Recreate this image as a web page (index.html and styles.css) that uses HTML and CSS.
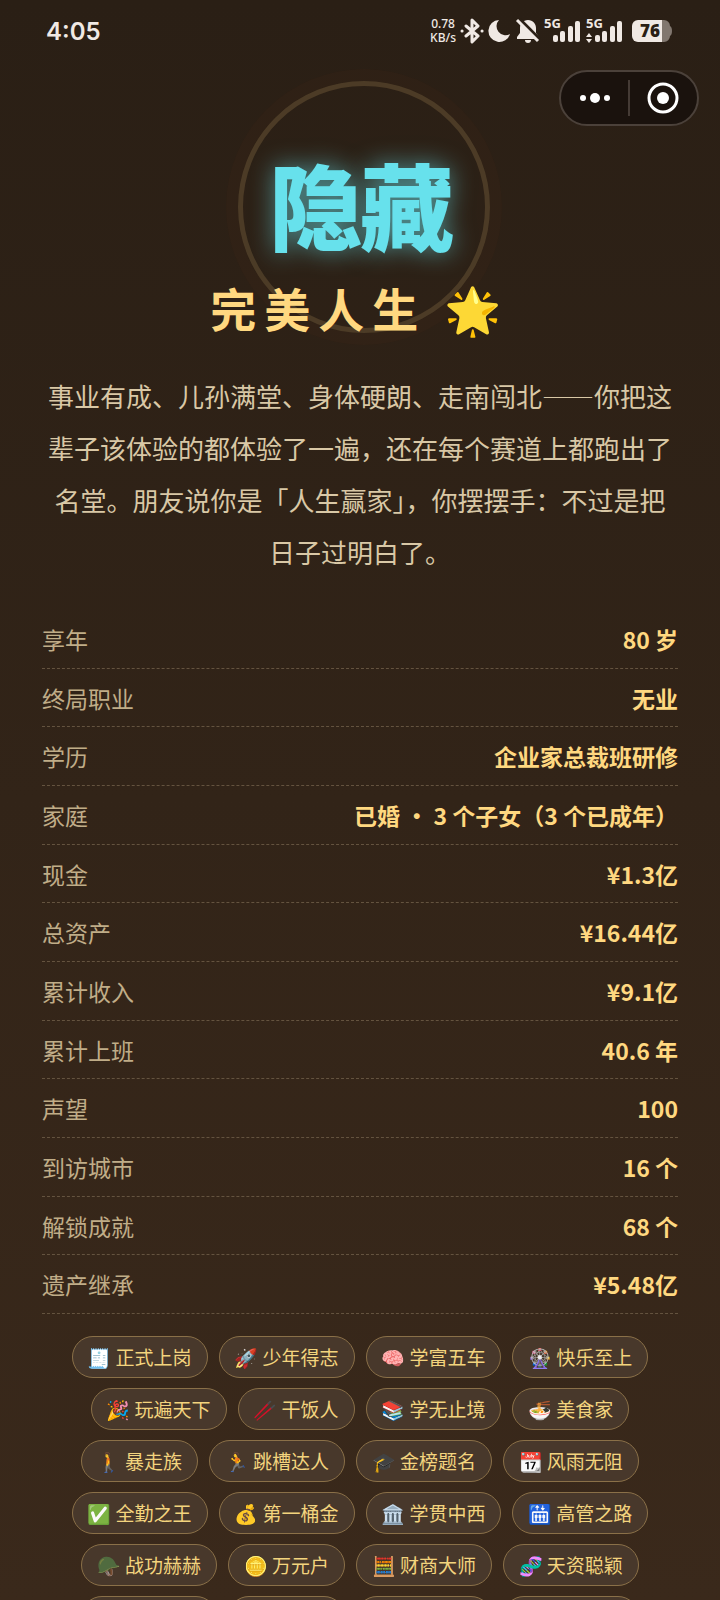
FILE: index.html
```
<!DOCTYPE html>
<html lang="zh-CN">

<head>
    <meta charset="utf-8">
    <meta name="viewport" content="width=device-width, initial-scale=1">
    <title>完美人生</title>
    <link rel="stylesheet" href="styles.css">
</head>

<body>
    <div class="screen">
        <header class="status">
            <span class="time">4:05</span>
            <div class="status-right">
                <span class="speed">0.78<br>KB/s</span>
                <svg width="25" height="26" viewBox="0 0 25 26" fill="none" stroke="#f0e9e4" stroke-width="3" stroke-linejoin="round" stroke-linecap="round">
                    <path d="M7 8l12 10-6 6V2l6 6L7 18"/>
                    <path d="M3 13h.1M23 13h.1"/>
                </svg>
                <svg width="24" height="24" viewBox="0 0 24 24" fill="#f0e9e4">
                    <path d="M12 1a11 11 0 1 0 11 14A9 9 0 0 1 12 1z"/>
                </svg>
                <svg width="26" height="26" viewBox="0 0 26 26" fill="#f0e9e4">
                    <path d="M14 2c-5 0-8 4-8 8v5l-3 4v2h22v-2l-3-4v-5c0-4-3-8-8-8z"/>
                    <path d="M11 22h6a3 3 0 0 1-6 0z"/>
                    <path d="M4 0l22 22" stroke="#2a1f15" stroke-width="4"/>
                    <path d="M3 2l21 21" stroke="#f0e9e4" stroke-width="3"/>
                </svg>
                <svg class="signal" width="39" height="30" viewBox="0 0 39 30" fill="#f0e9e4">
                    <text x="1" y="12">5G</text>
                    <rect x="10" y="19" width="5" height="7" rx="2"/>
                    <rect x="17" y="15" width="5" height="11" rx="2"/>
                    <rect x="25" y="10" width="5" height="16" rx="2"/>
                    <rect x="32" y="5" width="5" height="21" rx="2"/>
                </svg>
                <svg class="signal" width="39" height="30" viewBox="0 0 39 30" fill="#f0e9e4">
                    <text x="1" y="12">5G</text>
                    <path d="M1 21l3-4 3 4zM1 23l3 4 3-4z"/>
                    <rect x="10" y="19" width="5" height="7" rx="2"/>
                    <rect x="17" y="15" width="5" height="11" rx="2"/>
                    <rect x="25" y="10" width="5" height="16" rx="2"/>
                    <rect x="32" y="5" width="5" height="21" rx="2"/>
                </svg>
                <svg class="battery" width="41" height="24" viewBox="0 0 41 24">
                    <path d="M31 1h2a6 6 0 0 1 6 6q2 1 2 5t-2 5a6 6 0 0 1-6 6h-2z" fill="#81776f"/>
                    <path d="M7 1h24v22H7a6 6 0 0 1-6-6V7a6 6 0 0 1 6-6z" fill="#f0e9e4"/>
                    <text x="19" y="18" text-anchor="middle">76</text>
                </svg>
            </div>
        </header>

        <div class="capsule">
            <button type="button" aria-label="更多">
                <svg width="30" height="12" viewBox="0 0 30 12" fill="#fff">
                    <circle cx="3" cy="6" r="3"/>
                    <circle cx="15" cy="6" r="5"/>
                    <circle cx="27" cy="6" r="3"/>
                </svg>
            </button>
            <button type="button" aria-label="关闭">
                <svg width="32" height="32" viewBox="0 0 32 32" fill="#fff">
                    <circle cx="16" cy="16" r="14" fill="none" stroke="#fff" stroke-width="3"/>
                    <circle cx="16" cy="16" r="6"/>
                </svg>
            </button>
        </div>

        <main class="ending">
            <div class="hero">
                <div class="ring"></div>
                <div class="rank">隐藏</div>
                <h1 class="title">完美人生 🌟</h1>
            </div>

            <p class="story">事业有成、儿孙满堂、身体硬朗、走南闯北——你把这辈子该体验的都体验了一遍，还在每个赛道上都跑出了名堂。朋友说你是「人生赢家」，你摆摆手：不过是把日子过明白了。</p>

            <dl class="stats">
                <div class="row"><dt>享年</dt><dd>80 岁</dd></div>
                <div class="row"><dt>终局职业</dt><dd>无业</dd></div>
                <div class="row"><dt>学历</dt><dd>企业家总裁班研修</dd></div>
                <div class="row"><dt>家庭</dt><dd>已婚 · 3 个子女（3 个已成年）</dd></div>
                <div class="row"><dt>现金</dt><dd>¥1.3亿</dd></div>
                <div class="row"><dt>总资产</dt><dd>¥16.44亿</dd></div>
                <div class="row"><dt>累计收入</dt><dd>¥9.1亿</dd></div>
                <div class="row"><dt>累计上班</dt><dd>40.6 年</dd></div>
                <div class="row"><dt>声望</dt><dd>100</dd></div>
                <div class="row"><dt>到访城市</dt><dd>16 个</dd></div>
                <div class="row"><dt>解锁成就</dt><dd>68 个</dd></div>
                <div class="row"><dt>遗产继承</dt><dd>¥5.48亿</dd></div>
            </dl>

            <ul class="tags">
                <li>🧾 正式上岗</li>
                <li>🚀 少年得志</li>
                <li>🧠 学富五车</li>
                <li>🎡 快乐至上</li>
                <li>🎉 玩遍天下</li>
                <li>🥢 干饭人</li>
                <li>📚 学无止境</li>
                <li>🍜 美食家</li>
                <li>🚶 暴走族</li>
                <li>🏃 跳槽达人</li>
                <li>🎓 金榜题名</li>
                <li>📆 风雨无阻</li>
                <li>✅ 全勤之王</li>
                <li>💰 第一桶金</li>
                <li>🏛️ 学贯中西</li>
                <li>🛗 高管之路</li>
                <li>🪖 战功赫赫</li>
                <li>🪙 万元户</li>
                <li>🧮 财商大师</li>
                <li>🧬 天资聪颖</li>
                <li>🏠 安居乐业</li>
                <li>🚗 有车族</li>
                <li>💼 职场精英</li>
                <li>🌍 环球旅行</li>
            </ul>
        </main>
    </div>
</body>

</html>
```
FILE: styles.css
```
* {
    margin: 0;
    padding: 0;
    box-sizing: border-box;
}

body {
    font-family: "Noto Sans CJK SC", "Noto Color Emoji", sans-serif;
    background-color: #3a291b;
}

.screen {
    position: relative;
    height: 100vh;
    overflow: hidden;
    background: linear-gradient(#2a1f15, #3a291b);
}

/* 状态栏 */
.status {
    display: flex;
    justify-content: space-between;
    align-items: center;
    height: 62px;
    padding: 0 48px 0 46px;
    color: #f0e9e4;
}

.time {
    font-family: Inter, sans-serif;
    font-size: 24px;
    font-weight: 600;
}

.status-right {
    display: flex;
    align-items: center;
    gap: 3px;
}

.speed {
    font-family: "Noto Sans", sans-serif;
    font-size: 12px;
    font-weight: 500;
    line-height: 14px;
    text-align: center;
}

.signal {
    overflow: visible;
}

.signal text {
    font: bold 13px "Open Sans", sans-serif;
}

.battery {
    margin-left: 4px;
}

.battery text {
    font: 800 17px "Open Sans", sans-serif;
    fill: #2a1f15;
}

/* 小程序胶囊 */
.capsule {
    position: absolute;
    top: 70px;
    right: 21px;
    display: flex;
    width: 140px;
    height: 56px;
    border: 2px solid #4b413a;
    border-radius: 28px;
    background-color: #1a120d;
}

.capsule button {
    flex: 1;
    display: flex;
    align-items: center;
    justify-content: center;
    border: none;
    background: none;
    cursor: pointer;
}

.capsule button + button::before {
    content: "";
    position: absolute;
    left: 49%;
    width: 2px;
    height: 36px;
    background-color: #453b35;
}

.ending {
    padding: 0 42px;
}

.hero {
    position: relative;
    padding-top: 85px;
    text-align: center;
}

.ring {
    position: absolute;
    top: 19px;
    left: 50%;
    width: 252px;
    height: 252px;
    margin-left: -122px;
    border: 5px solid #4c3b26;
    border-radius: 50%;
    box-shadow: 0 0 0 12px rgba(255, 120, 60, 0.02);
}

.rank {
    position: relative;
    font-size: 94px;
    font-weight: 900;
    line-height: 112px;
    letter-spacing: -3px;
    color: #67e1ec;
    text-shadow: 0 0 24px rgba(103, 225, 236, 0.6);
}

.title {
    position: relative;
    padding-top: 16px;
    font-size: 46px;
    font-weight: bold;
    line-height: 64px;
    letter-spacing: 8px;
    color: #ffd880;
}

.story {
    padding: 31px 0 32px;
    font-size: 26px;
    line-height: 52px;
    text-align: center;
    color: #d9c8a6;
}

.stats {
    display: flex;
    flex-direction: column;
    min-height: 704px;
    font-size: 23px;
}

.row {
    flex: 1;
    display: flex;
    justify-content: space-between;
    align-items: center;
    border-bottom: 1px dashed #64533f;
}

.row dt {
    color: #c0ad88;
}

.row dd {
    font-weight: bold;
    color: #ffd880;
}

.tags {
    display: flex;
    flex-wrap: wrap;
    justify-content: center;
    gap: 10px 11px;
    padding-top: 22px;
    list-style: none;
}

.tags li {
    padding: 0 15px;
    border: 1px solid #8a7048;
    border-radius: 21px;
    background-color: #48382b;
    font-size: 19px;
    line-height: 40px;
    color: #f3d47e;
}
```
